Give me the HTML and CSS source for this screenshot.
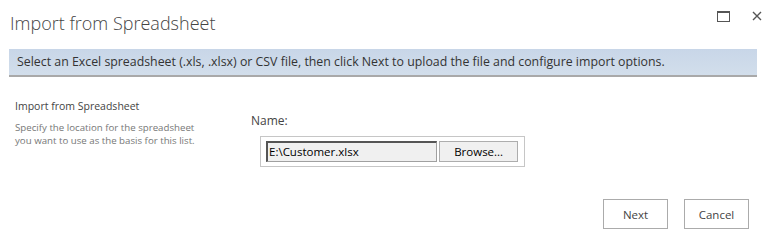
FILE: index.html
```html
<!DOCTYPE html>
<html lang="en">
<head>
    <meta charset="UTF-8">
    <title>Import from Spreadsheet</title>
    <link rel="stylesheet" href="styles.css">
</head>
<body>
    <div class="dialog">
        <div class="dialog-header">
            <h1>Import from Spreadsheet</h1>
            <div class="window-controls">
                <svg class="ctl" width="13" height="11" viewBox="0 0 13 11">
                    <rect x="0.5" y="0.5" width="12" height="10" fill="none" stroke="#555" stroke-width="1"/>
                    <rect x="0" y="0" width="13" height="2" fill="#555"/>
                </svg>
                <svg class="ctl" width="10" height="10" viewBox="0 0 10 10">
                    <path d="M1 1 L9 9 M9 1 L1 9" stroke="#555" stroke-width="1.4"/>
                </svg>
            </div>
        </div>
        <div class="info-bar">Select an Excel spreadsheet (.xls, .xlsx) or CSV file, then click Next to upload the file and configure import options.</div>
        <div class="section">
            <div class="section-label">
                <h3>Import from Spreadsheet</h3>
                <p>Specify the location for the spreadsheet you want to use as the basis for this list.</p>
            </div>
            <div class="section-body">
                <label>Name:</label>
                <div class="file-box">
                    <div class="file-input">E:\Customer.xlsx</div>
                    <button class="browse">Browse...</button>
                </div>
            </div>
        </div>
        <div class="actions">
            <button>Next</button>
            <button>Cancel</button>
        </div>
    </div>
</body>
</html>
```

FILE: styles.css
```css
body {
    margin: 0;
    padding: 0;
    background-color: #fff;
    font-family: "Open Sans", "Noto Sans", sans-serif;
    color: #444;
}
.dialog {
    width: 774px;
    height: 243px;
    box-sizing: border-box;
    padding: 0 17px 0 9px;
}
.dialog-header {
    display: flex;
    justify-content: space-between;
    align-items: flex-start;
    height: 49px;
}
.dialog-header h1 {
    margin: 11px 0 0 1px;
    font-size: 18px;
    font-weight: 300;
    color: #444;
}
.window-controls {
    display: flex;
    gap: 22px;
    margin-top: 11px;
    margin-right: -5px;
}
.info-bar {
    height: 26px;
    line-height: 25px;
    padding-left: 8px;
    font-size: 12.35px;
    color: #333;
    background: linear-gradient(#c8d6e8, #d2deeb);
    border-bottom: 2px solid #a9a9a9;
}
.section {
    display: flex;
    margin-top: 22px;
}
.section-label {
    width: 236px;
    padding-left: 6px;
}
.section-label h3 {
    margin: 0;
    font-size: 10.5px;
    font-weight: 400;
    color: #444;
}
.section-label p {
    margin: 8px 0 0 0;
    width: 190px;
    font-size: 9.7px;
    line-height: 13px;
    color: #777;
}
.section-body {
    padding-top: 13px;
}
.section-body label {
    display: block;
    font-size: 12px;
    color: #444;
    margin-bottom: 7px;
}
.file-box {
    display: flex;
    gap: 2px;
    margin-left: 9px;
    width: 265px;
    box-sizing: border-box;
    padding: 4px 6px 4px 5px;
    border: 1px solid #c6c6c6;
}
.file-input {
    width: 172px;
    height: 21px;
    box-sizing: border-box;
    border: 1px solid #a0a0a0;
    border-top: 2px solid #555;
    border-left: 2px solid #555;
    background: #f0f0f0;
    font-family: "Open Sans", sans-serif;
    font-size: 11.5px;
    line-height: 17px;
    color: #000;
    padding-left: 1px;
}
.browse {
    width: 79px;
    height: 21px;
    border: 1px solid #adadad;
    background: #f0f0f0;
    font-family: "Open Sans", sans-serif;
    font-size: 11.5px;
    color: #000;
    padding: 0;
}
.actions {
    display: flex;
    justify-content: flex-end;
    gap: 16px;
    margin-top: 32px;
    padding-right: 8px;
}
.actions button {
    width: 65px;
    height: 30px;
    border: 1px solid #ababab;
    background: #fff;
    font-family: "Open Sans", sans-serif;
    font-size: 11.5px;
    color: #444;
    padding: 0;
}
```
